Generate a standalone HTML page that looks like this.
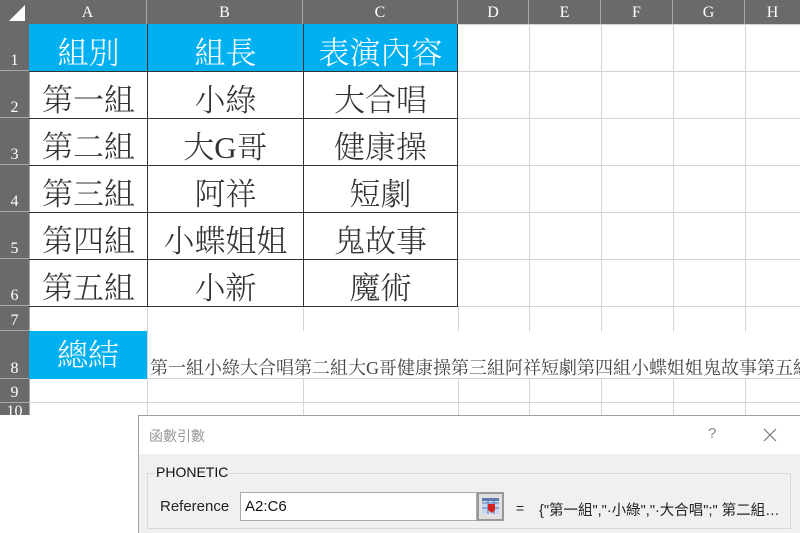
<!DOCTYPE html>
<html><head><meta charset="utf-8"><style>
*{margin:0;padding:0;box-sizing:border-box}
body{width:800px;height:533px;overflow:hidden;background:#fff;position:relative;font-family:"Liberation Serif","Noto Serif CJK TC",serif}
.a{position:absolute}
.hl{position:absolute;background:#d4d4d4}
.ch{position:absolute;top:0;height:24px;color:#fff;font-size:16px;text-align:center;line-height:26px;border-right:1px solid #a8a8a8}
.rh{position:absolute;left:0;width:29px;color:#fff;font-size:16px;text-align:center;border-bottom:1px solid #a8a8a8;display:flex;align-items:flex-end;justify-content:center;padding-bottom:0}
.c{position:absolute;font-size:31px;color:#333;text-align:center;display:flex;align-items:center;justify-content:center;padding-top:6px;white-space:nowrap;font-weight:300}
.sans{font-family:"Liberation Sans","Noto Sans CJK TC",sans-serif}
</style></head><body>
<div class="hl" style="left:29px;top:0;width:1px;height:415px;background:#a8a8a8"></div>
<div class="hl" style="left:529px;top:24px;width:1px;height:391px"></div>
<div class="hl" style="left:601px;top:24px;width:1px;height:391px"></div>
<div class="hl" style="left:673px;top:24px;width:1px;height:391px"></div>
<div class="hl" style="left:745px;top:24px;width:1px;height:391px"></div>
<div class="hl" style="left:147px;top:307px;width:1px;height:108px"></div>
<div class="hl" style="left:303px;top:307px;width:1px;height:24px"></div>
<div class="hl" style="left:303px;top:379px;width:1px;height:36px"></div>
<div class="hl" style="left:458px;top:307px;width:1px;height:108px"></div>
<div class="hl" style="left:458px;top:24px;width:342px;height:1px"></div>
<div class="hl" style="left:458px;top:71px;width:342px;height:1px"></div>
<div class="hl" style="left:458px;top:118px;width:342px;height:1px"></div>
<div class="hl" style="left:458px;top:165px;width:342px;height:1px"></div>
<div class="hl" style="left:458px;top:212px;width:342px;height:1px"></div>
<div class="hl" style="left:458px;top:259px;width:342px;height:1px"></div>
<div class="hl" style="left:458px;top:306px;width:342px;height:1px"></div>
<div class="hl" style="left:29px;top:331px;width:771px;height:1px"></div>
<div class="hl" style="left:29px;top:378px;width:771px;height:1px"></div>
<div class="hl" style="left:29px;top:402px;width:771px;height:1px"></div>
<div class="a" style="left:0;top:0;width:800px;height:24px;background:#6a6a6a"></div>
<div class="a" style="left:0;top:0;width:29px;height:415px;background:#6a6a6a"></div>
<svg class="a" style="left:8px;top:4px" width="18" height="18"><polygon points="17,1 17,17 1,17" fill="#fff"/></svg>
<div class="ch" style="left:29px;width:118px">A</div>
<div class="ch" style="left:147px;width:156px">B</div>
<div class="ch" style="left:303px;width:155px">C</div>
<div class="ch" style="left:458px;width:71px">D</div>
<div class="ch" style="left:529px;width:72px">E</div>
<div class="ch" style="left:601px;width:72px">F</div>
<div class="ch" style="left:673px;width:72px">G</div>
<div class="ch" style="left:745px;width:55px;border:0">H</div>
<div class="rh" style="top:24px;height:47px">1</div>
<div class="rh" style="top:71px;height:47px">2</div>
<div class="rh" style="top:118px;height:47px">3</div>
<div class="rh" style="top:165px;height:47px">4</div>
<div class="rh" style="top:212px;height:47px">5</div>
<div class="rh" style="top:259px;height:47px">6</div>
<div class="rh" style="top:306px;height:25px">7</div>
<div class="rh" style="top:331px;height:48px">8</div>
<div class="rh" style="top:379px;height:24px">9</div>
<div class="rh" style="top:403px;height:24px;border:0;align-items:flex-start">10</div>
<div class="a" style="left:29px;top:24px;width:429px;height:47px;background:#00b0f0"></div>
<div class="a" style="left:29px;top:71px;width:429px;height:236px;border:1px solid #333;border-left:0;border-top:1px solid #333"></div>
<div class="a" style="left:147px;top:24px;width:1px;height:283px;background:#333"></div>
<div class="a" style="left:303px;top:24px;width:1px;height:283px;background:#333"></div>
<div class="a" style="left:457px;top:24px;width:1px;height:283px;background:#333"></div>
<div class="a" style="left:29px;top:118px;width:429px;height:1px;background:#333"></div>
<div class="a" style="left:29px;top:165px;width:429px;height:1px;background:#333"></div>
<div class="a" style="left:29px;top:212px;width:429px;height:1px;background:#333"></div>
<div class="a" style="left:29px;top:259px;width:429px;height:1px;background:#333"></div>
<div class="c" style="left:30px;top:24px;width:117px;height:47px;color:#fff">組別</div>
<div class="c" style="left:148px;top:24px;width:155px;height:47px;color:#fff">組長</div>
<div class="c" style="left:304px;top:24px;width:153px;height:47px;color:#fff">表演內容</div>
<div class="c" style="left:30px;top:71px;width:117px;height:47px">第一組</div>
<div class="c" style="left:148px;top:71px;width:155px;height:47px">小綠</div>
<div class="c" style="left:304px;top:71px;width:153px;height:47px">大合唱</div>
<div class="c" style="left:30px;top:118px;width:117px;height:47px">第二組</div>
<div class="c" style="left:148px;top:118px;width:155px;height:47px">大G哥</div>
<div class="c" style="left:304px;top:118px;width:153px;height:47px">健康操</div>
<div class="c" style="left:30px;top:165px;width:117px;height:47px">第三組</div>
<div class="c" style="left:148px;top:165px;width:155px;height:47px">阿祥</div>
<div class="c" style="left:304px;top:165px;width:153px;height:47px">短劇</div>
<div class="c" style="left:30px;top:212px;width:117px;height:47px">第四組</div>
<div class="c" style="left:148px;top:212px;width:155px;height:47px">小蝶姐姐</div>
<div class="c" style="left:304px;top:212px;width:153px;height:47px">鬼故事</div>
<div class="c" style="left:30px;top:259px;width:117px;height:47px">第五組</div>
<div class="c" style="left:148px;top:259px;width:155px;height:47px">小新</div>
<div class="c" style="left:304px;top:259px;width:153px;height:47px">魔術</div>
<div class="a" style="left:29px;top:331px;width:118px;height:48px;background:#00b0f0"></div>
<div class="c" style="left:29px;top:331px;width:118px;height:48px;color:#fff;padding-top:0;padding-bottom:6px">總結</div>
<div class="a" style="left:148px;top:331px;width:652px;height:47px;background:#fff"></div>
<div class="a" style="left:150px;top:356px;font-size:18px;color:#444;white-space:nowrap;line-height:24px">第一組小綠大合唱第二組大G哥健康操第三組阿祥短劇第四組小蝶姐姐鬼故事第五組</div>
<div class="a" style="left:0;top:415px;width:800px;height:118px;background:#fff"></div>
<div class="a sans" style="left:138px;top:415px;width:662px;height:118px;border:1px solid #a0a0a0;border-right:0;border-bottom:0;background:#f0f0f0">
 <div class="a" style="left:0;top:0;width:662px;height:38px;background:#fff"></div>
 <div class="a" style="left:10px;top:10px;font-size:14px;color:#999">函數引數</div>
 <div class="a" style="left:569px;top:9px;font-size:15px;color:#888">?</div>
 <svg class="a" style="left:624px;top:12px" width="14" height="14"><path d="M1 1L13 13M13 1L1 13" stroke="#777" stroke-width="1.2"/></svg>
 <div class="a" style="left:8px;top:57px;width:644px;height:56px;border:1px solid #d8d8d8"></div>
 <div class="a" style="left:16px;top:48px;font-size:14px;color:#111;background:#f0f0f0;padding:0 1px">PHONETIC</div>
 <div class="a" style="left:21px;top:82px;font-size:15px;color:#222">Reference</div>
 <div class="a" style="left:101px;top:76px;width:237px;height:29px;border:1px solid #aaa;background:#fff;font-size:15px;padding:5px 4px;color:#111">A2:C6</div>
 <div class="a" style="left:338px;top:76px;width:27px;height:29px;border:2px solid #999;background:#e0e0e0">
  <svg width="23" height="25"><rect x="3" y="4" width="17" height="16" fill="#c8d8f0"/><path d="M3 9H20M3 14H20M9 4V20M15 4V20" stroke="#5a7ab0" stroke-width="1"/><rect x="3" y="4" width="17" height="3" fill="#5a7ab0"/><path d="M9 10L16 10L16 16L13 19L9 16Z" fill="#d42020"/></svg>
 </div>
 <div class="a" style="left:377px;top:84px;font-size:14px;color:#222">=</div>
 <div class="a" style="left:400px;top:83px;font-size:14.5px;color:#222;white-space:nowrap">{"第一組","·小綠","·大合唱";" 第二組…</div>
</div>
</body></html>
